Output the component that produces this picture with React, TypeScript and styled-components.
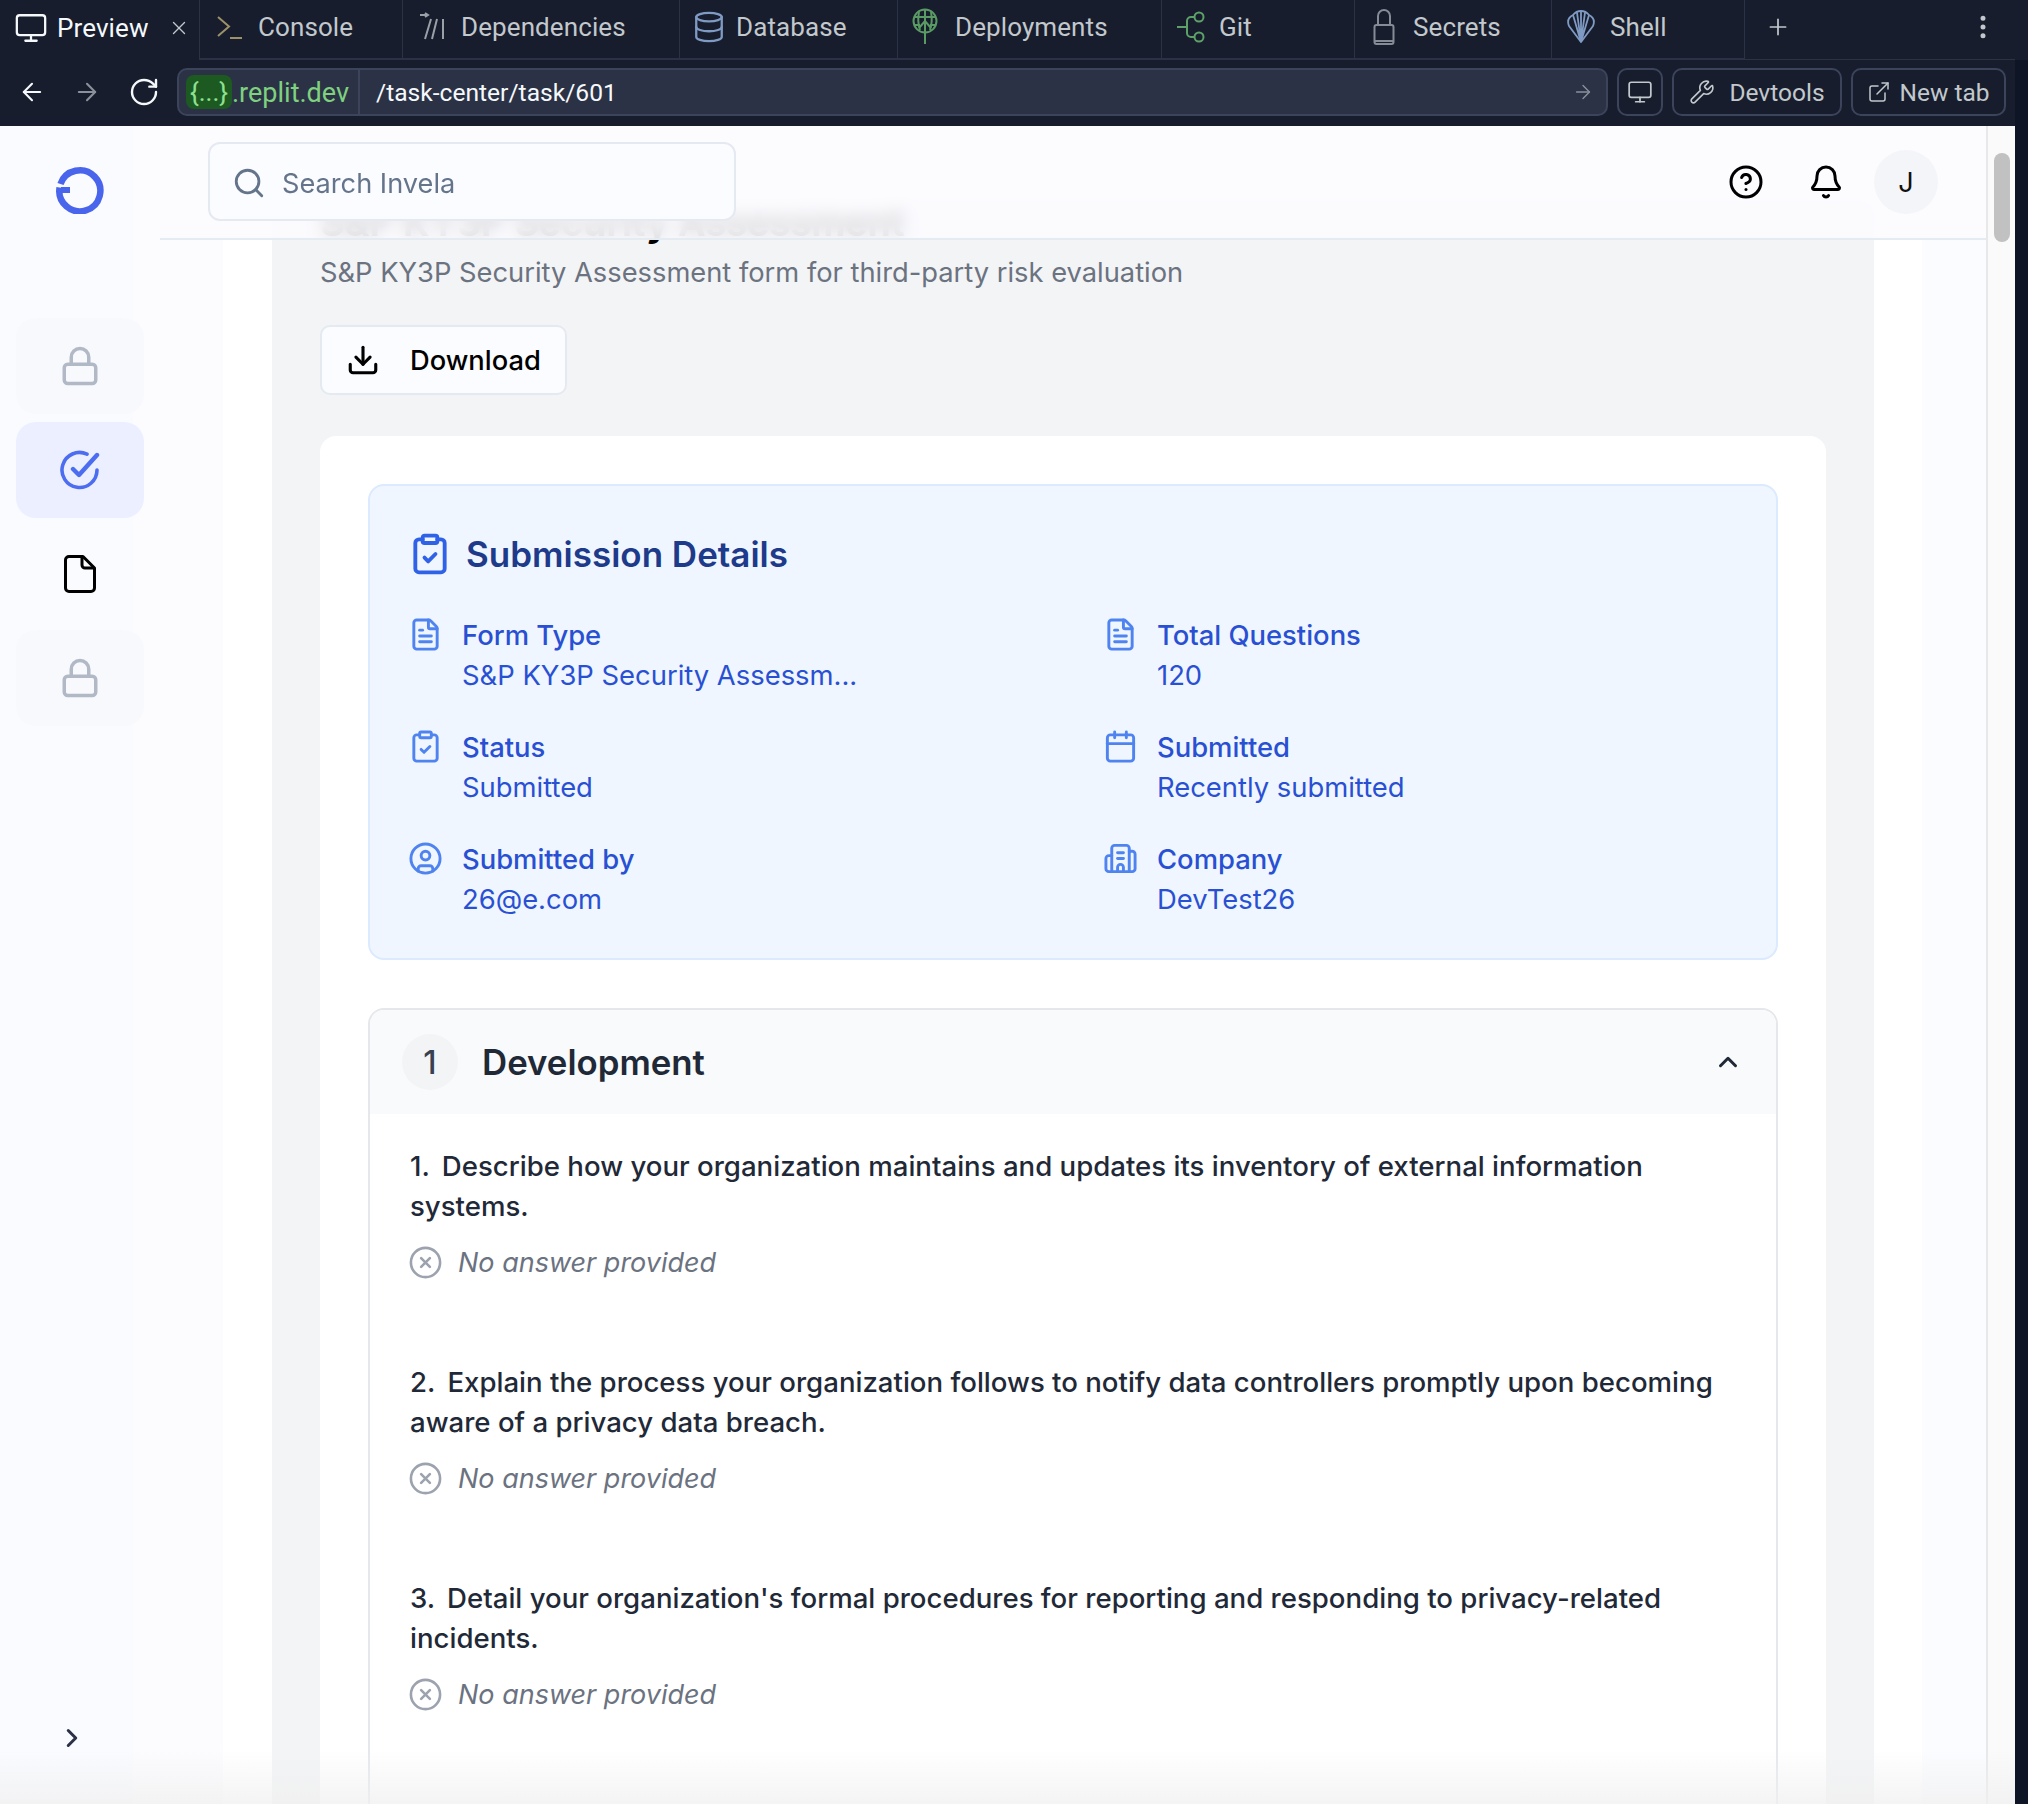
import React from "react";
import styled, { createGlobalStyle } from "styled-components";
import {
  ArrowLeft, ArrowRight, RotateCw, Monitor, Database, Lock, Plus, EllipsisVertical, Wrench, ExternalLink,
  Search, Download, ClipboardCheck, FileText, Calendar, CircleUser, Building2, CircleX, ChevronUp, ChevronRight,
  CircleHelp, Bell, X,
} from "lucide-react";

const Global = createGlobalStyle`
  html, body { margin: 0; padding: 0; height: 1804px; overflow: hidden; background: #0e1525; }
  * { box-sizing: border-box; }
  #root { height: 1804px; }
`;

const Shell = styled.div`
  width: 2028px;
  height: 1804px;
  display: flex;
  flex-direction: column;
  background: #0e1525;
  overflow: hidden;
  font-family: Inter, "Liberation Sans", sans-serif;
`;

const TabBar = styled.div`
  height: 60px;
  display: flex;
  background: #171d2d;
  font-family: Roboto, "Liberation Sans", sans-serif;
  padding-right: 13px;
`;

const Tab = styled.div<{ $w: number; $active?: boolean; $pad?: number; $gap?: number }>`
  width: ${(p) => p.$w}px;
  height: 60px;
  flex: none;
  display: flex;
  align-items: center;
  gap: ${(p) => p.$gap ?? 16}px;
  padding: 0 0 5px ${(p) => p.$pad ?? 14}px;
  font-size: 26px;
  letter-spacing: 0.1px;
  color: ${(p) => (p.$active ? "#f5f9fc" : "#c2c8cc")};
  border-right: 1px solid #2b3245;
  border-bottom: ${(p) => (p.$active ? "none" : "2px solid #2b3245")};
`;

const TabClose = styled.span`
  margin-left: auto;
  margin-right: 9px;
  display: flex;
  color: #c2c8cc;
`;

const TabFill = styled.div`
  flex: 1;
  display: flex;
  align-items: center;
  justify-content: space-between;
  padding: 0 17px 5px 20px;
  color: #c2c8cc;
  border-bottom: 1px solid #2b3245;
`;

const AddressRow = styled.div`
  height: 66px;
  display: flex;
  align-items: flex-start;
  padding: 8px 9px 0 0;
  background: #171d2d;
  font-family: Roboto, "Liberation Sans", sans-serif;
  margin-right: 13px;
`;

const NavGroup = styled.div`
  width: 177px;
  height: 48px;
  flex: none;
  display: flex;
  align-items: center;
  padding-left: 18px;
  gap: 27px;
  color: #f5f9fc;
`;

const NavDim = styled.span`
  display: flex;
  color: #8a919a;
`;

const UrlBar = styled.div`
  flex: 1;
  height: 48px;
  display: flex;
  align-items: center;
  background: #2b3245;
  border: 2px solid #3c445c;
  border-radius: 10px;
  padding: 0 12px 0 7px;
  font-size: 24.6px;
`;

const Sub = styled.span`
  height: 34px;
  width: 46px;
  display: flex;
  align-items: center;
  justify-content: center;
  flex: none;
  background: #1d5a22;
  color: #8fe08f;
  border-radius: 8px;
  font-size: 26px;
`;

const Host = styled.span`
  color: #7fd07f;
  width: 128px;
  height: 44px;
  line-height: 46px;
  flex: none;
  font-size: 27px;
  border-right: 2px solid #3c445c;
`;

const Path = styled.span`
  flex: 1;
  color: #f5f9fc;
  padding-left: 16px;
`;

const UrlGo = styled.span`
  display: flex;
  color: #8a919a;
`;

const ChromeBtn = styled.div<{ $w: number; $gap?: number }>`
  width: ${(p) => p.$w}px;
  height: 48px;
  flex: none;
  margin-left: 9px;
  display: flex;
  align-items: center;
  justify-content: center;
  gap: ${(p) => p.$gap ?? 10}px;
  border: 2px solid #3c445c;
  border-radius: 10px;
  color: #c2c8cc;
  font-size: 24.5px;
`;

const Viewport = styled.div`
  flex: 1;
  display: flex;
  min-height: 0;
  padding-right: 13px;
  position: relative;
`;

const Frame = styled.div`
  flex: 1;
  display: flex;
  min-width: 0;
  position: relative;
  overflow: hidden;
  background: linear-gradient(
    90deg,
    #fafbff 0,
    #fafbff 133px,
    #fcfcff 133px,
    #fcfcff 223px,
    #ffffff 223px,
    #ffffff 1922px,
    #fbfcff 1922px
  );
`;

const Sidebar = styled.aside`
  width: 160px;
  flex: none;
  display: flex;
  flex-direction: column;
  align-items: center;
`;

const LogoSlot = styled.div`
  height: 192px;
  flex: none;
  display: flex;
  align-items: flex-start;
  padding-top: 40px;
`;

const NavList = styled.div`
  display: flex;
  flex-direction: column;
  gap: 8px;
`;

const NavItem = styled.div<{ $kind: "locked" | "active" | "plain" }>`
  width: 128px;
  height: 96px;
  border-radius: 20px;
  display: flex;
  align-items: center;
  justify-content: center;
  background: ${(p) => (p.$kind === "locked" ? "#f8f9fd" : p.$kind === "active" ? "#ebefff" : "transparent")};
  color: ${(p) => (p.$kind === "locked" ? "#b2b9c6" : p.$kind === "active" ? "#4d6df0" : "#000")};
`;

const Expand = styled.div`
  margin-top: auto;
  margin-bottom: 51px;
  margin-right: 16px;
  display: flex;
  color: #2b3245;
`;

const Main = styled.main`
  flex: 1;
  min-width: 0;
  display: flex;
  flex-direction: column;
  overflow: hidden;
`;

const Header = styled.header`
  height: 114px;
  flex: none;
  position: relative;
  z-index: 2;
  display: flex;
  align-items: flex-start;
  padding: 16px 48px 0 48px;
  background: rgba(251, 252, 255, 0.86);
  backdrop-filter: blur(8px);
  border-bottom: 2px solid #e5ebf2;
  color: #000;
`;

const SearchBox = styled.div`
  width: 528px;
  height: 79px;
  display: flex;
  align-items: center;
  gap: 16px;
  padding: 3px 0 0 22px;
  background: #fbfcff;
  border: 2px solid #e5e9f2;
  border-radius: 12px;
  color: #64748b;
  font-size: 27.2px;
`;

const HeaderTools = styled.div`
  margin-left: auto;
  display: flex;
  align-items: center;
  gap: 44px;
  height: 64px;
  margin-top: 8px;
`;

const Avatar = styled.div`
  width: 64px;
  height: 64px;
  margin-left: -14px;
  border-radius: 50%;
  background: #f3f5f9;
  display: flex;
  align-items: center;
  justify-content: center;
  font-size: 27px;
  color: #111;
`;

const Content = styled.div`
  margin: -39px 112px 0 112px;
  background: #f3f4f6;
  padding: 0 48px;
  flex: 1;
`;

const PageTitle = styled.h1`
  margin: 0;
  height: 44px;
  font-size: 37.4px;
  line-height: 44px;
  font-weight: 700;
  color: #000;
  white-space: nowrap;
`;

const PageSub = styled.p`
  margin: 0;
  height: 56px;
  font-size: 27.3px;
  line-height: 56px;
  color: #6b7280;
  white-space: nowrap;
`;

const DownloadBtn = styled.div`
  margin-top: 24px;
  width: 247px;
  height: 70px;
  display: flex;
  align-items: center;
  gap: 30px;
  padding-left: 24px;
  background: #fbfcff;
  border: 2px solid #e5e9f0;
  border-radius: 10px;
  font-size: 27.3px;
  font-weight: 500;
  color: #000;
`;

const Card = styled.section`
  margin-top: 41px;
  background: #fff;
  border-radius: 16px 16px 0 0;
  padding: 48px;
  height: 1400px;
`;

const Details = styled.div`
  height: 476px;
  background: #eff6ff;
  border: 2px solid #dbeafe;
  border-radius: 16px;
  padding: 46px 38px 0 38px;
`;

const DetailsHead = styled.div`
  display: flex;
  align-items: center;
  gap: 14px;
  height: 44px;
  color: #2f62e6;
`;

const DetailsTitle = styled.h2`
  margin: 0;
  font-size: 35px;
  font-weight: 600;
  color: #1e3a8a;
  line-height: 44px;
`;

const Fields = styled.div`
  margin-top: 39px;
  display: grid;
  grid-template-columns: 623px 623px;
  column-gap: 72px;
  row-gap: 32px;
`;

const Field = styled.div`
  display: flex;
  gap: 19px;
  color: #4f84f0;
`;

const FieldIcon = styled.span`
  display: flex;
  flex: none;
  height: 35px;
  margin-top: 2px;
`;

const FieldText = styled.div`
  display: flex;
  flex-direction: column;
  font-size: 27.4px;
  line-height: 40px;
  color: #2950d3;
`;

const FieldLabel = styled.span`
  font-weight: 500;
`;

const FieldValue = styled.span`
  font-weight: 400;
`;

const SectionBox = styled.div`
  margin-top: 48px;
  border: 2px solid #e5e7eb;
  border-radius: 16px 16px 0 0;
  overflow: hidden;
  height: 900px;
`;

const SectionHead = styled.div`
  height: 104px;
  display: flex;
  align-items: center;
  padding: 0 33px 0 32px;
  background: #f9fafb;
`;

const SectionNum = styled.div`
  width: 56px;
  height: 56px;
  border-radius: 50%;
  background: #f3f4f6;
  display: flex;
  align-items: center;
  justify-content: center;
  font-size: 32px;
  font-weight: 500;
  color: #374151;
`;

const SectionTitle = styled.h3`
  margin: 0 0 0 24px;
  flex: 1;
  font-size: 34.8px;
  font-weight: 600;
  color: #1f2937;
`;

const SectionChevron = styled.span`
  display: flex;
  color: #1f2937;
`;

const Questions = styled.div`
  padding: 32px 40px 0;
  display: flex;
  flex-direction: column;
  gap: 76px;
`;

const Question = styled.div`
  display: flex;
  flex-direction: column;
  gap: 12px;

  &:last-child {
    margin-top: 2px;
  }
`;

const QuestionText = styled.p`
  margin: 0;
  font-size: 27.6px;
  line-height: 40px;
  font-weight: 450;
  color: #1f2937;
`;

const QuestionNo = styled.span`
  margin-right: 12px;
`;

const Answer = styled.div`
  display: flex;
  align-items: center;
  height: 48px;
  gap: 15px;
  margin-left: -2px;
  color: #9ca3af;
`;

const AnswerText = styled.span`
  font-size: 27px;
  font-style: italic;
  color: #6b7280;
`;

const Track = styled.div`
  width: 29px;
  flex: none;
  background: #fafafa;
  border-left: 2px solid #e8e8e8;
  padding: 27px 5px 0 6px;
`;

const Thumb = styled.div`
  height: 89px;
  border-radius: 8px;
  background: #c1c1c1;
`;

const Fade = styled.div`
  position: absolute;
  left: 0;
  right: 0;
  bottom: 0;
  height: 54px;
  z-index: 3;
  pointer-events: none;
  background: linear-gradient(180deg, rgba(240, 240, 240, 0), rgba(240, 240, 240, 0.75));
`;

const ConsoleIcon = () => (
  <svg width="28" height="28" viewBox="0 0 28 28" fill="none" stroke="#9c9168" strokeWidth="2">
    <path d="M2 4l11 9.5L2 23" />
    <path d="M14 25h12" />
  </svg>
);
const DepsIcon = () => (
  <svg width="26" height="30" viewBox="0 0 26 30" fill="none" stroke="#9aa0a8" strokeWidth="2">
    <path d="M1 3h7M6 1l3 2-3 2" />
    <path d="M12 7L6 27M18 7l-5 20M24 7v20" />
  </svg>
);
const DeployIcon = () => (
  <svg width="26" height="38" viewBox="0 0 26 38" fill="none" stroke="#5a9a63" strokeWidth="2">
    <circle cx="13" cy="13" r="11.5" />
    <path d="M13 2v34M2 9h22M2 17h6M18 17h6M7 4c-1 5-1 12 1 18M19 4c1 5 1 12-1 18" />
    <path d="M7 20l6-7 6 7" />
  </svg>
);
const GitIcon = () => (
  <svg width="30" height="34" viewBox="0 0 30 34" fill="none" stroke="#5da168" strokeWidth="2">
    <circle cx="23" cy="7" r="4.5" />
    <circle cx="23" cy="27" r="4.5" />
    <path d="M1 17h10M18.5 7H15a4 4 0 0 0-4 4v12a4 4 0 0 0 4 4h3.5" />
  </svg>
);
const SecretIcon = () => (
  <svg width="22" height="38" viewBox="0 0 22 38" fill="none" stroke="#868c96" strokeWidth="2">
    <path d="M5 17V8a6 6 0 0 1 12 0v9" />
    <rect x="1.5" y="17" width="19" height="19" rx="2" />
    <path d="M2 33h18" strokeWidth="2" />
  </svg>
);
const ShellIcon = () => (
  <svg width="30" height="34" viewBox="0 0 30 34" fill="none" stroke="#7f9bc4" strokeWidth="1.8" strokeLinejoin="round">
    <path d="M15 32L3 16c-2-5 0-9 4-11 2-2.5 5-4 8-4s6 1.5 8 4c4 2 6 6 4 11z" />
    <path d="M15 32L7 5M15 32L11 2.5M15 32V1M15 32l4-29.5M15 32l8-27" />
  </svg>
);

const Logo = () => (
  <svg width="48" height="48" viewBox="0 0 48 48" fill="none">
    <path d="M4.5 18A20.5 20.5 0 1 1 3.6 21.5" stroke="#4965ec" strokeWidth="6.5" />
    <rect x="5" y="21" width="9" height="6" fill="#4965ec" />
  </svg>
);

const CheckBadge = () => (
  <svg width="40" height="40" viewBox="0 0 40 40" fill="none" stroke="currentColor" strokeWidth="3.6" strokeLinecap="round" strokeLinejoin="round">
    <path d="M37 20a17.5 17.5 0 1 1-10-15.8" />
    <path d="M13 19l6 6L37 5" strokeWidth="4.4" />
  </svg>
);

const FileFold = () => (
  <svg width="32" height="38" viewBox="0 0 32 38" fill="none" stroke="#000" strokeWidth="3" strokeLinejoin="round">
    <path d="M5 1.5h14L30.5 13v20a3.5 3.5 0 0 1-3.5 3.5H5A3.5 3.5 0 0 1 1.5 33V5A3.5 3.5 0 0 1 5 1.5z" />
    <path d="M18 1.5V10a3 3 0 0 0 3 3h9.5" />
  </svg>
);

const fields = [
  { icon: FileText, label: "Form Type", value: "S&P KY3P Security Assessm..." },
  { icon: FileText, label: "Total Questions", value: "120" },
  { icon: ClipboardCheck, label: "Status", value: "Submitted" },
  { icon: Calendar, label: "Submitted", value: "Recently submitted" },
  { icon: CircleUser, label: "Submitted by", value: "26@e.com" },
  { icon: Building2, label: "Company", value: "DevTest26" },
];

const questions = [
  "Describe how your organization maintains and updates its inventory of external information systems.",
  "Explain the process your organization follows to notify data controllers promptly upon becoming aware of a privacy data breach.",
  "Detail your organization's formal procedures for reporting and responding to privacy-related incidents.",
  "Outline how your organization establishes, validates, and maintains its data handling policies.",
];

export default function App() {
  return (
    <Shell>
      <Global />
      <TabBar>
        <Tab $w={200} $active $gap={9}>
          <Monitor size={34} strokeWidth={1.6} />
          Preview
          <TabClose><X size={22} strokeWidth={1.5} /></TabClose>
        </Tab>
        <Tab $w={203} $pad={16} $gap={14}><ConsoleIcon />Console</Tab>
        <Tab $w={277} $pad={16} $gap={16}><DepsIcon />Dependencies</Tab>
        <Tab $w={218} $pad={12} $gap={10}>
          <Database size={34} strokeWidth={1.6} color="#7f9bc4" />Database
        </Tab>
        <Tab $w={264} $pad={14} $gap={17}><DeployIcon />Deployments</Tab>
        <Tab $w={193} $pad={14} $gap={13}><GitIcon />Git</Tab>
        <Tab $w={197} $pad={18} $gap={18}><SecretIcon />Secrets</Tab>
        <Tab $w={193} $pad={14} $gap={14}><ShellIcon />Shell</Tab>
        <TabFill>
          <Plus size={26} strokeWidth={1.6} />
          <EllipsisVertical size={30} strokeWidth={2} />
        </TabFill>
      </TabBar>
      <AddressRow>
        <NavGroup>
          <ArrowLeft size={28} strokeWidth={1.8} />
          <NavDim><ArrowRight size={28} strokeWidth={1.8} /></NavDim>
          <RotateCw size={32} strokeWidth={1.8} />
        </NavGroup>
        <UrlBar>
          <Sub>{"{...}"}</Sub>
          <Host>.replit.dev</Host>
          <Path>/task-center/task/601</Path>
          <UrlGo><ArrowRight size={22} strokeWidth={1.5} /></UrlGo>
        </UrlBar>
        <ChromeBtn $w={46}><Monitor size={26} strokeWidth={1.6} /></ChromeBtn>
        <ChromeBtn $w={170} $gap={14}><Wrench size={26} strokeWidth={1.5} />Devtools</ChromeBtn>
        <ChromeBtn $w={155} $gap={8}><ExternalLink size={24} strokeWidth={1.5} />New tab</ChromeBtn>
      </AddressRow>
      <Viewport>
        <Frame>
          <Sidebar>
            <LogoSlot><Logo /></LogoSlot>
            <NavList>
              <NavItem $kind="locked"><Lock size={42} strokeWidth={2} /></NavItem>
              <NavItem $kind="active"><CheckBadge /></NavItem>
              <NavItem $kind="plain"><FileFold /></NavItem>
              <NavItem $kind="locked"><Lock size={42} strokeWidth={2} /></NavItem>
            </NavList>
            <Expand><ChevronRight size={30} strokeWidth={2.4} /></Expand>
          </Sidebar>
          <Main>
            <Header>
              <SearchBox>
                <Search size={34} strokeWidth={2} />
                Search Invela
              </SearchBox>
              <HeaderTools>
                <CircleHelp size={36} strokeWidth={2} />
                <Bell size={36} strokeWidth={2} />
                <Avatar>J</Avatar>
              </HeaderTools>
            </Header>
            <Content>
              <PageTitle>S&amp;P KY3P Security Assessment</PageTitle>
              <PageSub>S&amp;P KY3P Security Assessment form for third-party risk evaluation</PageSub>
              <DownloadBtn><Download size={34} strokeWidth={2.2} />Download</DownloadBtn>
              <Card>
                <Details>
                  <DetailsHead>
                    <ClipboardCheck size={44} strokeWidth={2.1} />
                    <DetailsTitle>Submission Details</DetailsTitle>
                  </DetailsHead>
                  <Fields>
                    {fields.map((f) => (
                      <Field key={f.label}>
                        <FieldIcon><f.icon size={35} strokeWidth={2} /></FieldIcon>
                        <FieldText>
                          <FieldLabel>{f.label}</FieldLabel>
                          <FieldValue>{f.value}</FieldValue>
                        </FieldText>
                      </Field>
                    ))}
                  </Fields>
                </Details>
                <SectionBox>
                  <SectionHead>
                    <SectionNum>1</SectionNum>
                    <SectionTitle>Development</SectionTitle>
                    <SectionChevron><ChevronUp size={30} strokeWidth={2.4} /></SectionChevron>
                  </SectionHead>
                  <Questions>
                    {questions.map((q, i) => (
                      <Question key={i}>
                        <QuestionText><QuestionNo>{i + 1}.</QuestionNo>{q}</QuestionText>
                        <Answer>
                          <CircleX size={35} strokeWidth={1.8} />
                          <AnswerText>No answer provided</AnswerText>
                        </Answer>
                      </Question>
                    ))}
                  </Questions>
                </SectionBox>
              </Card>
            </Content>
          </Main>
          <Track><Thumb /></Track>
          <Fade />
        </Frame>
      </Viewport>
    </Shell>
  );
}
